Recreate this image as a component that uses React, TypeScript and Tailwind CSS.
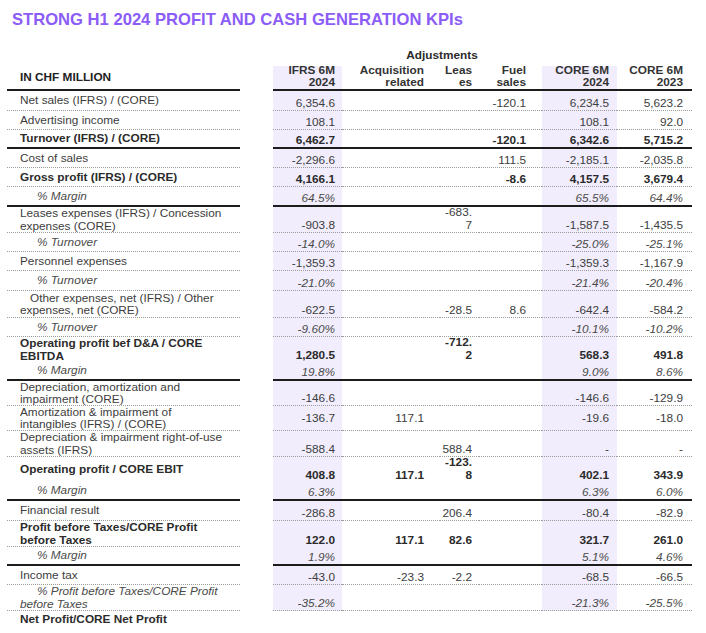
import React from "react";

type Row = {
  label: string;
  kind?: "bold" | "italic";
  indent?: string;
  h: string;
  line: "dot" | "solid" | "none";
  valueLine?: "dot" | "solid" | "none";
  values?: string[];
  middle?: boolean;
  noBg?: boolean;
};

const cols = [
  { w: "w-[69px]", pr: "pr-[7px]", bg: true },
  { w: "w-[98px]", pr: "pr-[16px]", bg: false },
  { w: "w-[39px]", pr: "pr-[7px]", bg: false },
  { w: "w-[63px]", pr: "pr-[16px]", bg: false },
  { w: "w-[75px]", pr: "pr-[8px]", bg: true },
  { w: "w-[75px]", pr: "pr-[9px]", bg: false },
];

const headers = ["IFRS 6M\n2024", "Acquisition\nrelated", "Leas\nes", "Fuel\nsales", "CORE 6M\n2024", "CORE 6M\n2023"];

const rows: Row[] = [
  { label: "Net sales (IFRS) / (CORE)", h: "h-[20px]", line: "dot", values: ["6,354.6", "", "", "-120.1", "6,234.5", "5,623.2"] },
  { label: "Advertising income", h: "h-[19px]", line: "dot", values: ["108.1", "", "", "", "108.1", "92.0"] },
  { label: "Turnover (IFRS) / (CORE)", kind: "bold", h: "h-[19px]", line: "solid", values: ["6,462.7", "", "", "-120.1", "6,342.6", "5,715.2"] },
  { label: "Cost of sales", h: "h-[19px]", line: "dot", values: ["-2,296.6", "", "", "111.5", "-2,185.1", "-2,035.8"] },
  { label: "Gross profit (IFRS) / (CORE)", kind: "bold", h: "h-[19px]", line: "dot", values: ["4,166.1", "", "", "-8.6", "4,157.5", "3,679.4"] },
  { label: "% Margin", kind: "italic", indent: "indent-[17px]", h: "h-[20px]", line: "solid", values: ["64.5%", "", "", "", "65.5%", "64.4%"] },
  { label: "Leases expenses (IFRS) / Concession\nexpenses (CORE)", h: "h-[26px]", line: "dot", values: ["-903.8", "", "-683.\n7", "", "-1,587.5", "-1,435.5"] },
  { label: "% Turnover", kind: "italic", indent: "indent-[17px]", h: "h-[19px]", line: "dot", values: ["-14.0%", "", "", "", "-25.0%", "-25.1%"] },
  { label: "Personnel expenses", h: "h-[19px]", line: "dot", values: ["-1,359.3", "", "", "", "-1,359.3", "-1,167.9"] },
  { label: "% Turnover", kind: "italic", indent: "indent-[17px]", h: "h-[20px]", line: "dot", values: ["-21.0%", "", "", "", "-21.4%", "-20.4%"] },
  { label: "Other expenses, net (IFRS) / Other\nexpenses, net (CORE)", indent: "indent-[10px]", h: "h-[27px]", line: "dot", values: ["-622.5", "", "-28.5", "8.6", "-642.4", "-584.2"] },
  { label: "% Turnover", kind: "italic", indent: "indent-[17px]", h: "h-[19px]", line: "dot", values: ["-9.60%", "", "", "", "-10.1%", "-10.2%"] },
  { label: "Operating profit bef D&A / CORE\nEBITDA", kind: "bold", h: "h-[25px]", line: "none", values: ["1,280.5", "", "-712.\n2", "", "568.3", "491.8"] },
  { label: "% Margin", kind: "italic", indent: "indent-[17px]", h: "h-[19px]", line: "solid", values: ["19.8%", "", "", "", "9.0%", "8.6%"] },
  { label: "Depreciation, amortization and\nimpairment (CORE)", h: "h-[25px]", line: "dot", values: ["-146.6", "", "", "", "-146.6", "-129.9"] },
  { label: "Amortization & impairment of\nintangibles (IFRS) / (CORE)", h: "h-[25px]", line: "dot", middle: true, values: ["-136.7", "117.1", "", "", "-19.6", "-18.0"] },
  { label: "Depreciation & impairment right-of-use\nassets (IFRS)", h: "h-[26px]", line: "dot", values: ["-588.4", "", "588.4", "", "-", "-"] },
  { label: "Operating profit / CORE EBIT", kind: "bold", h: "h-[25px]", line: "none", values: ["408.8", "117.1", "-123.\n8", "", "402.1", "343.9"] },
  { label: "% Margin", kind: "italic", indent: "indent-[17px]", h: "h-[19px]", line: "solid", values: ["6.3%", "", "", "", "6.3%", "6.0%"] },
  { label: "Financial result", h: "h-[20px]", line: "dot", values: ["-286.8", "", "206.4", "", "-80.4", "-82.9"] },
  { label: "Profit before Taxes/CORE Profit\nbefore Taxes", kind: "bold", h: "h-[26px]", line: "dot", valueLine: "none", values: ["122.0", "117.1", "82.6", "", "321.7", "261.0"] },
  { label: "% Margin", kind: "italic", indent: "indent-[17px]", h: "h-[19px]", line: "solid", values: ["1.9%", "", "", "", "5.1%", "4.6%"] },
  { label: "Income tax", h: "h-[19px]", line: "dot", values: ["-43.0", "-23.3", "-2.2", "", "-68.5", "-66.5"] },
  { label: "% Profit before Taxes/CORE Profit\nbefore Taxes", kind: "italic", indent: "indent-[17px]", h: "h-[26px]", line: "dot", values: ["-35.2%", "", "", "", "-21.3%", "-25.5%"] },
  { label: "Net Profit/CORE Net Profit", kind: "bold", h: "h-[17px]", line: "none", noBg: true, values: ["", "", "", "", "", ""] },
];

const lineCls = {
  dot: "border-b border-dotted border-[#9c9c9c]",
  solid: "border-b-2 border-solid border-[#1c1c1c]",
  none: "",
};

const kindCls = (kind?: Row["kind"]) =>
  kind === "bold" ? "font-bold text-[#2b2b2b]" : kind === "italic" ? "italic text-[#4a4a4a]" : "text-[#3d3d3d]";

const TableRow: React.FC<{ row: Row }> = ({ row }) => {
  const vLine = lineCls[row.valueLine ?? row.line];
  return (
    <div className={`flex ${row.h}`}>
      {/* label */}
      <div className={`ml-[7px] w-[233px] pl-[13px] flex items-center ${lineCls[row.line]}`}>
        <div className={`whitespace-pre-line leading-[12.5px] ${row.indent ?? ""} ${kindCls(row.kind)}`}>
          {row.label}
        </div>
      </div>
      <div className="w-[33px]" />
      {cols.map((c, i) => (
        <div
          key={i}
          className={`${c.w} ${c.pr} flex flex-col items-end text-right ${row.middle ? "justify-center" : "justify-end pb-[1px]"} ${
            c.bg && !row.noBg ? "bg-[#f1edfd]" : ""
          } ${vLine}`}
        >
          <div className={`whitespace-pre-line leading-[12.5px] ${kindCls(row.kind)}`}>{row.values?.[i]}</div>
        </div>
      ))}
    </div>
  );
};

export default function App() {
  return (
    <div
      className="w-[706px] h-[633px] overflow-hidden bg-white text-[11.8px]"
      style={{ fontFamily: '"Liberation Sans", Arial, sans-serif' }}
    >
      <div className="pl-[12px] pt-[10px] leading-[20px] text-[16.6px] font-bold text-[#8b5cf6]">
        STRONG H1 2024 PROFIT AND CASH GENERATION KPIs
      </div>

      <div className="mt-[16px]">
        {/* Adjustments group header */}
        <div className="flex h-[20px]">
          <div className="ml-[342px] w-[200px] pt-[2px] text-center font-bold leading-[14px] text-[#2b2b2b]">Adjustments</div>
        </div>

        {/* column headers */}
        <div className="flex h-[25px]">
          <div className="ml-[7px] w-[233px] pl-[13px] flex items-center border-b-2 border-[#1c1c1c] font-bold text-[#222]">
            IN CHF MILLION
          </div>
          <div className="w-[33px]" />
          {cols.map((c, i) => (
            <div
              key={i}
              className={`${c.w} ${c.pr} flex flex-col justify-end items-end text-right pb-[1px] border-b-2 border-[#1c1c1c] ${
                c.bg ? "bg-[#f1edfd]" : ""
              }`}
            >
              <div className="whitespace-pre-line leading-[12px] font-bold text-[#333]">{headers[i]}</div>
            </div>
          ))}
        </div>

        {rows.map((r, i) => (
          <TableRow key={i} row={r} />
        ))}
      </div>
    </div>
  );
}
